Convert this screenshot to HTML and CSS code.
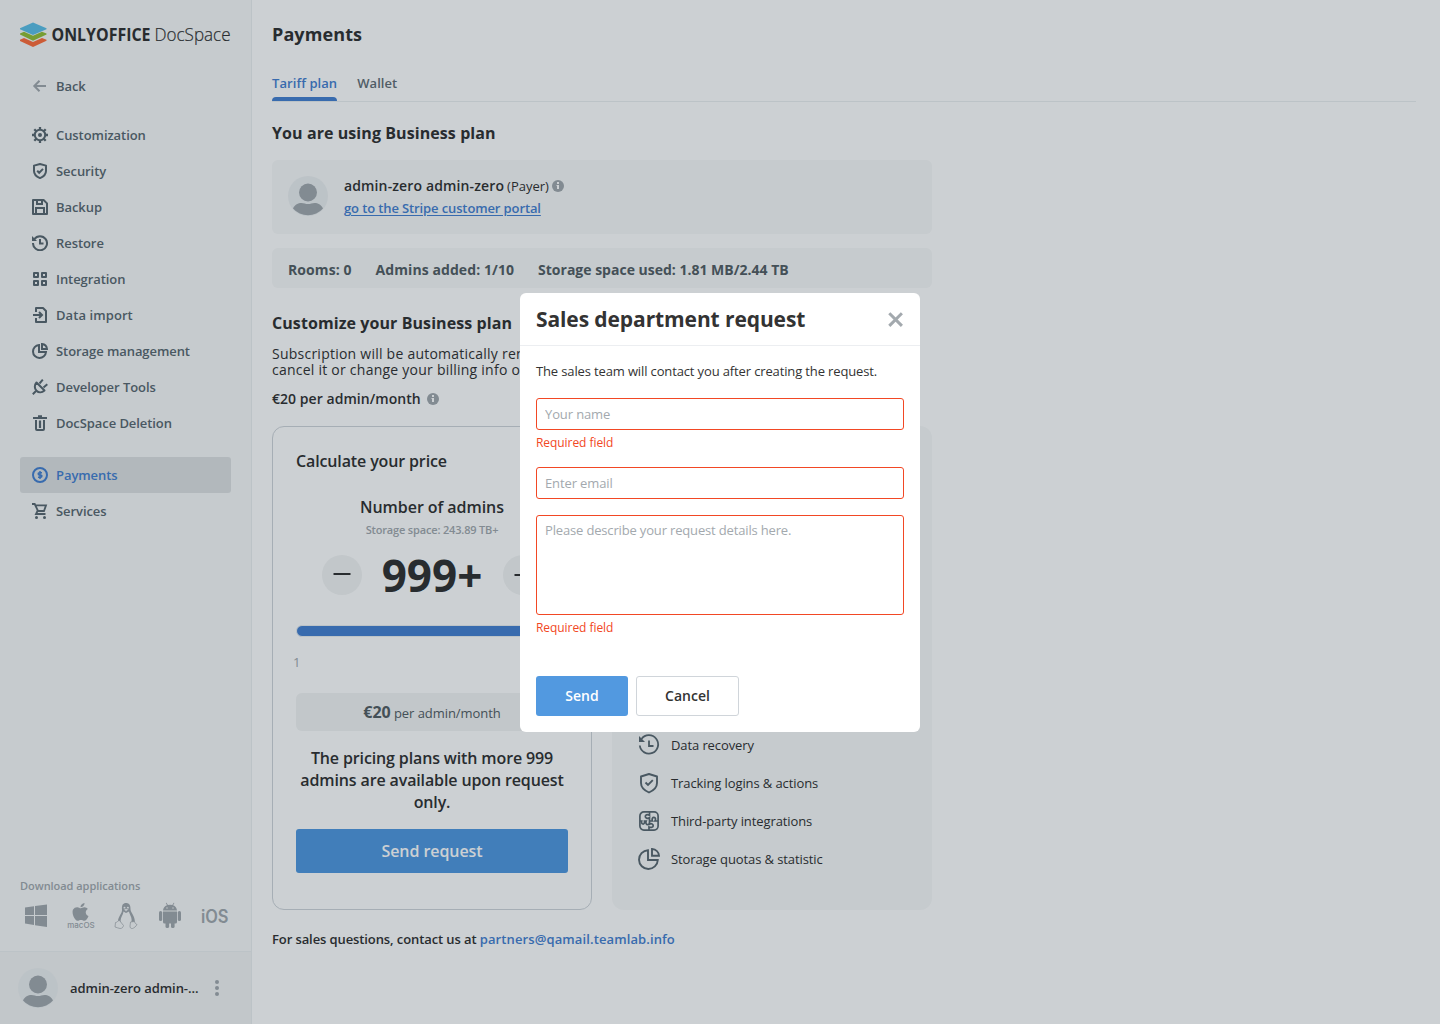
FILE: index.html
```html
<!DOCTYPE html>
<html lang="en">
<head>
<meta charset="utf-8">
<title>Payments - ONLYOFFICE DocSpace</title>
<link rel="stylesheet" href="styles.css">
</head>
<body>
<svg class="sprite" width="0" height="0">
  <symbol id="shield" viewBox="0 0 16 16"><path d="M8 1 14 2.600V8c0 3.400-2.600 5.700-6 7.100C4.600 13.700 2 11.400 2 8V2.600z" fill="none" stroke="currentColor" stroke-width="2" stroke-linejoin="round"/><path d="m5.200 7.800 2 2 3.800-3.900" fill="none" stroke="currentColor" stroke-width="2"/></symbol>
  <symbol id="person" viewBox="0 0 40 40"><circle class="person-bg" cx="20" cy="20" r="20"/><circle cx="20" cy="16.500" r="9"/><path d="M5 32.500C7 28.500 10 27 13.500 27 16 27.300 17.500 28 20 28s4-.700 6.500-1c3.500 0 6.500 1.500 8.500 5.500A20 20 0 0 1 5 32.500z"/></symbol>
  <symbol id="info" viewBox="0 0 12 12"><circle cx="6" cy="6" r="6"/><path class="info-mark" d="M5 2h2v2H5zM4.500 5H7v4H5V6h-.500z"/></symbol>
</svg>

<div class="app">
  <aside class="sidebar">
    <svg class="logo" width="214" height="26" viewBox="0 0 214 26">
      <path d="M0 17.800 4 16l9 4 9-4 4.500 1.800v1L13 25 0 18.900z" fill="#ff6f3d"/>
      <path d="M0 11.500 4 9.700l9 4 9-4 4.500 1.800v1L13 18.800 0 12.600z" fill="#95c038"/>
      <path d="M0 6.300 13 .500l13.500 5.800v1L13 13 0 7.300z" fill="#5dc0e8"/>
      <text class="logo-bold" x="31.500" y="19" textLength="99" lengthAdjust="spacingAndGlyphs">ONLYOFFICE</text>
      <text class="logo-light" x="134.500" y="19" textLength="76" lengthAdjust="spacingAndGlyphs">DocSpace</text>
    </svg>
    <a class="nav-item back"><svg width="16" height="16" viewBox="0 0 16 16"><path d="M14 8H2.500M7.500 2.800 2.300 8l5.200 5.200" fill="none" stroke="currentColor" stroke-width="2"/></svg>Back</a>
    <nav class="nav">
      <a class="nav-item"><svg width="16" height="16" viewBox="0 0 16 16"><circle cx="8" cy="8" r="5.200" fill="none" stroke="currentColor" stroke-width="2"/><circle cx="8" cy="8" r="2" fill="currentColor"/><path d="M8 0v3M8 13v3M0 8h3M13 8h3M2.300 2.300l2 2M11.700 11.700l2 2M13.700 2.300l-2 2M4.300 11.700l-2 2" stroke="currentColor" stroke-width="2.300"/></svg>Customization</a>
      <a class="nav-item"><svg width="16" height="16"><use href="#shield"/></svg>Security</a>
      <a class="nav-item"><svg width="16" height="16" viewBox="0 0 16 16"><g fill="none" stroke="currentColor" stroke-width="2"><path d="M1 1h10.600L15 4.400V15H1z" stroke-linejoin="round"/><path d="M5 1v4h5V1M4 15V9h8v6"/></g></svg>Backup</a>
      <a class="nav-item"><svg width="16" height="16" viewBox="0 0 16 16"><g fill="none" stroke="currentColor" stroke-width="2"><path d="M2.300 4.200A7 7 0 1 1 1 8"/><path d="M8 4v4.500h3.500"/></g><path d="M0 1v5h5z" fill="currentColor"/></svg>Restore</a>
      <a class="nav-item"><svg width="16" height="16" viewBox="0 0 16 16"><path d="M2 2h4v4H2zM10 2h4v4h-4zM2 10h4v4H2zM10 10h4v4h-4z" fill="none" stroke="currentColor" stroke-width="2" stroke-linejoin="round"/></svg>Integration</a>
      <a class="nav-item import"><svg width="16" height="16" viewBox="0 0 16 16"><g fill="none" stroke="currentColor" stroke-width="2"><path d="M4 5V1h7l3 3v11H4v-4" stroke-linejoin="round"/><path d="M1 8h8M7 5l3 3-3 3"/></g></svg>Data import</a>
      <a class="nav-item"><svg width="16" height="16" viewBox="0 0 16 16"><g fill="none" stroke="currentColor" stroke-width="2"><path d="M7 2a6.500 6.500 0 1 0 7 7H7z"/><path d="M10 1c2.700.300 4.700 2.300 5 5h-5z"/></g></svg>Storage management</a>
      <a class="nav-item"><svg width="16" height="16" viewBox="0 0 16 16"><g fill="none" stroke="currentColor" stroke-width="2"><path d="M4.500 3.500 12.500 11.500C10 13.800 6.700 14 4.500 11.800S2.200 6 4.500 3.500z" stroke-linejoin="round"/><path d="M4 12l-3.200 3.200M7.500 4.500l3.300-3.800M11.500 8.500l3.800-3.300"/></g></svg>Developer Tools</a>
      <a class="nav-item"><svg width="16" height="16" viewBox="0 0 16 16"><g fill="none" stroke="currentColor" stroke-width="2"><path d="M1 3h14M6 1.200h4M4 5v9q0 1 1 1h6q1 0 1-1V5"/><path d="M8 5.500V13" stroke-width="2.200"/></g></svg>DocSpace Deletion</a>
    </nav>
    <nav class="nav">
      <a class="nav-item active"><svg width="16" height="16" viewBox="0 0 16 16"><circle cx="8" cy="8" r="7" fill="none" stroke="currentColor" stroke-width="2"/><path d="M10 5.700H7.300a1.100 1.100 0 0 0 0 2.200h1.400a1.100 1.100 0 0 1 0 2.300H6M8 4v8" fill="none" stroke="currentColor" stroke-width="1.500"/></svg>Payments</a>
      <a class="nav-item"><svg width="16" height="16" viewBox="0 0 16 16"><path d="M0 1h2.700l3.300 7h6l2-5.700H3.500M5.500 8 4 11h9.500" fill="none" stroke="currentColor" stroke-width="1.800"/><circle cx="4.500" cy="14.500" r="1.500" fill="currentColor"/><circle cx="12.500" cy="14.500" r="1.500" fill="currentColor"/></svg>Services</a>
    </nav>

    <div class="downloads">
      <span>Download applications</span>
      <div class="download-icons">
        <svg width="28" height="28" viewBox="0 0 28 28"><path d="M3 5.500 12 4.200V13H3zM13 4 25 2.500V13H13zM3 14h9v9L3 21.500zM13 14h12v11l-12-1.800z"/></svg>
        <svg width="28" height="28" viewBox="0 0 28 28"><path d="M17.500 1c.200 2-1.500 4.200-4 4.200C13.300 3.200 15.300 1.200 17.500 1zM13.700 6.300c.900 0 2-1 3.800-1 1.300 0 2.600.700 3.300 1.800-3.100 1.900-2.500 5.700.700 7-.600 1.900-2.200 4.600-3.900 4.700-1.300 0-1.900-.800-3.600-.800s-2.400.800-3.500.800c-2.700-.100-6-7-4.600-11C7 5.800 8.800 5.100 10.300 5.200c1.500.100 2.500 1.100 3.400 1.100z"/><text class="mac" x=".3" y="25.700" textLength="27.300" lengthAdjust="spacingAndGlyphs">macOS</text></svg>
        <svg width="28" height="28" viewBox="0 0 28 28"><path d="M10 7.500C9.600 3 11 .900 14 .900s4.700 2 4.500 6.300c.300 4 4.500 6.300 4.400 13.200L17 21H9l-3-2c.300-5 4.400-7.600 4-11.500z"/><path class="cut" d="M11.500 9.500 14 11l3-1.500c.500 3 3.300 6 2.500 10-.500 3-2 4.500-5 4.500s-5.500-2-6-5c.300-4 2.600-6 3-9.500z"/><circle class="cut" cx="12.500" cy="5.700" r="1"/><circle class="cut" cx="15.900" cy="5.700" r="1"/><path class="foot" d="M3.500 20.500c2 0 2-2 4-2 1.500 1.500 2.500 3.500 4 5-.500 2-1.500 3-3.500 3-2-.500-3.500-1-5-1.500zM18.500 20l4-.500c.5 1.500 1 2.500 2.500 3-1 2-3 3.500-4.500 4-2 .3-2.500-1-2.500-2.500z"/><path d="M11.500 7.500 14 6.500l3 1-3 2z" class="foot"/></svg>
        <svg width="28" height="28" viewBox="0 0 28 28"><path d="M7 9.500h14V20q0 1.500-1.500 1.500h-11Q7 21.500 7 20zM7 8.500c.200-2.600 1.700-4.400 4-5.300L9.800 1l.700-.300 1.400 2.300a9 9 0 0 1 4.400 0L17.700.700l.700.300-1.300 2.200c2.300.9 3.700 2.700 3.900 5.300z"/><rect x="3" y="9" width="3.200" height="10" rx="1.600"/><rect x="21.800" y="9" width="3.200" height="10" rx="1.600"/><rect x="9.500" y="17" width="3.600" height="9" rx="1.600"/><rect x="15" y="17" width="3.600" height="9" rx="1.600"/><circle class="cut" cx="11" cy="6" r=".7"/><circle class="cut" cx="17" cy="6" r=".7"/></svg>
        <svg width="28" height="28" viewBox="0 0 28 28"><text class="ios" x="0" y="20.500" textLength="27.500" lengthAdjust="spacingAndGlyphs">iOS</text></svg>
      </div>
    </div>
    <div class="user">
      <svg class="avatar" width="40" height="40"><use href="#person"/></svg>
      <span class="user-name">admin-zero admin-...</span>
      <svg class="dots" width="4" height="16" viewBox="0 0 4 16"><circle cx="2" cy="2" r="2"/><circle cx="2" cy="8" r="2"/><circle cx="2" cy="14" r="2"/></svg>
    </div>
  </aside>

  <main class="main">
    <h1>Payments</h1>
    <div class="tabs"><a class="tab selected">Tariff plan</a><a class="tab">Wallet</a></div>
    <h2 class="plan-title">You are using Business plan</h2>
    <section class="payer">
      <svg class="avatar" width="40" height="40"><use href="#person"/></svg>
      <div>
        <div class="payer-name"><b>admin-zero admin-zero</b><span>(Payer)</span><svg class="info" width="12" height="12"><use href="#info"/></svg></div>
        <a class="portal">go to the Stripe customer portal</a>
      </div>
    </section>
    <section class="stats"><span>Rooms: 0</span><span>Admins added: 1/10</span><span>Storage space used: 1.81 MB/2.44 TB</span></section>
    <h2 class="customize">Customize your Business plan</h2>
    <p class="renewal">Subscription will be automatically renewed.<br>cancel it or change your billing info on</p>
    <div class="rate">€20 per admin/month<svg class="info" width="12" height="12"><use href="#info"/></svg></div>
    <div class="cards">
      <section class="calc">
        <h3>Calculate your price</h3>
        <div class="count-title">Number of admins</div>
        <div class="count-note">Storage space: 243.89 TB+</div>
        <div class="counter">
          <span class="round"><svg width="18" height="18" viewBox="0 0 18 18"><path d="M.500 8h17" stroke="currentColor" stroke-width="2"/></svg></span>
          <span class="count">999+</span>
          <span class="round"><svg width="18" height="18" viewBox="0 0 18 18"><path d="M.500 9h17M9 .500v17" stroke="currentColor" stroke-width="2"/></svg></span>
        </div>
        <div class="slider"></div>
        <div class="slider-min">1</div>
        <div class="price"><b>€20</b> per admin/month</div>
        <p class="upon">The pricing plans with more 999 admins are available upon request only.</p>
        <button class="request">Send request</button>
      </section>
      <section class="benefits">
        <div class="benefit"><svg width="24" height="24" viewBox="0 0 24 24"><g fill="none" stroke="currentColor" stroke-width="1.800"><path d="M4.500 6A9.200 9.200 0 1 1 2.800 12.500"/><path d="M12 7.500V13h4.500"/></g><path d="M2 3v6h6z" fill="currentColor"/></svg>Data recovery</div>
        <div class="benefit"><svg width="24" height="24" viewBox="0 0 24 24"><path d="m12 3 8 2.500V12c0 4.500-3.500 7.500-8 9.500-4.500-2-8-5-8-9.500V5.500z" fill="none" stroke="currentColor" stroke-width="1.900" stroke-linejoin="round"/><path d="m8.500 11.500 2.500 2.500 4.800-4.800" fill="none" stroke="currentColor" stroke-width="1.900"/></svg>Tracking logins &amp; actions</div>
        <div class="benefit"><svg width="24" height="24" viewBox="0 0 24 24"><g fill="none" stroke="currentColor" stroke-width="1.700"><rect x="2.900" y="2.900" width="18.200" height="18.200" rx="4"/><path d="M12.500 3v3.300C10 5 8.300 6 8.300 7.500s2 2.500 4.200 1.300V12c.300 2.300-.500 3.700-1.800 3.700S8.300 14 9.200 12H7.500c.300 2-.500 3.200-1.700 3S4.300 13.500 4.700 12H3M12.500 12h3c-1-2.300 0-3.700 1.500-3.700S19 10 18 12h3M12.500 12v3.200c2-1.200 3.700 0 3.700 1.500s-2 2.300-4.200 1.300v3"/></g></svg>Third-party integrations</div>
        <div class="benefit"><svg width="24" height="24" viewBox="0 0 24 24"><g fill="none" stroke="currentColor" stroke-width="1.900"><path d="M11 3.200A9.400 9.400 0 1 0 20.800 13H11z"/><path d="M15 2c4 .300 6.800 3 7 6.800h-7z"/></g></svg>Storage quotas &amp; statistic</div>
      </section>
    </div>
    <p class="contact">For sales questions, contact us at <a>partners@qamail.teamlab.info</a></p>
  </main>
</div>

<div class="backdrop">
  <div class="dialog">
    <header class="dialog-head"><span>Sales department request</span><svg width="17" height="17" viewBox="0 0 17 17"><path d="m2.300 2.300 12.600 12.600M14.900 2.300 2.300 14.900" stroke="#a3a9ae" stroke-width="3"/></svg></header>
    <div class="dialog-body">
      <p class="lead">The sales team will contact you after creating the request.</p>
      <input class="field" placeholder="Your name">
      <div class="error">Required field</div>
      <input class="field email" placeholder="Enter email">
      <textarea class="field details" placeholder="Please describe your request details here."></textarea>
      <div class="error">Required field</div>
      <div class="actions"><button class="send">Send</button><button class="cancel">Cancel</button></div>
    </div>
  </div>
</div>
</body>
</html>
```
FILE: styles.css
```css
* { box-sizing: border-box; }
body { margin: 0; font-family: "Open Sans", sans-serif; font-size: 13px; line-height: 20px; color: #333; background: #fff; overflow: hidden; }
h1, h2, h3, p { margin: 0; }
button, input, textarea { font-family: inherit; }
svg { flex: none; display: block; }
.sprite { position: absolute; }
.app { display: flex; height: 1024px; }

.sidebar { width: 252px; flex: none; display: flex; flex-direction: column; background: #f8f9f9; border-right: 1px solid #eceff1; }
.logo { margin: 22px 0 20px 20px; overflow: visible; }
.logo-bold { font-weight: 700; font-size: 17px; fill: #333; }
.logo-light { font-weight: 300; font-size: 18px; fill: #333; stroke: #333; stroke-width: .2px; }
.nav { margin-bottom: 16px; }
.nav-item { display: flex; align-items: center; gap: 8px; height: 36px; margin: 0 20px; padding-left: 12px; font-weight: 600; letter-spacing: -.07px; color: #5c6a72; border-radius: 3px; }
.nav-item.import { letter-spacing: .08px; }
.nav-item.active { background: #dfe2e3; color: #4781d1; }
.back { margin-bottom: 13px; }
.back svg { color: #a3a9ae; }
.downloads { margin-top: auto; padding: 0 20px 21px; font-size: 11px; font-weight: 600; line-height: 16px; letter-spacing: -.04px; color: #a3a9ae; }
.download-icons { display: flex; justify-content: space-between; margin: 8px 2px 0; fill: #a3a9ae; }
.download-icons svg { overflow: visible; }
.cut { fill: #f8f9f9; }
.foot { fill: #f8f9f9; stroke: #a3a9ae; stroke-width: .7; }
.mac { font: 500 8px "Inter", sans-serif; }
.ios { font: 600 18px "Inter", sans-serif; }
.user { display: flex; align-items: center; height: 73px; padding-left: 18px; background: #f3f4f4; border-top: 1px solid #eceff1; font-weight: 600; letter-spacing: -.05px; }
.user-name { width: 145px; margin-left: 12px; }
.dots { fill: #a3a9ae; }
.avatar { fill: #a3a9ae; }
.person-bg { fill: #eceff1; }
.info { fill: #a3a9ae; }
.info-mark { fill: #fff; }

.main { flex: 1; padding: 0 24px 0 20px; }
h1 { height: 68px; font-size: 18px; line-height: 68px; font-weight: 700; letter-spacing: .1px; }
.tabs { display: flex; gap: 20px; height: 34px; border-bottom: 1px solid #eceff1; font-weight: 600; letter-spacing: .07px; color: #657077; }
.tab { height: 33px; padding-top: 5px; }
.tab.selected { display: flex; flex-direction: column; justify-content: space-between; color: #4781d1; }
.tab.selected::after { content: ""; height: 4px; border-radius: 4px 4px 0 0; background: #4781d1; }
h2 { font-size: 16px; line-height: 22px; font-weight: 700; letter-spacing: .08px; }
.plan-title { margin: 20px 0 16px; }
.payer { display: flex; gap: 16px; width: 660px; height: 74px; padding: 16px; background: #f8f9f9; border-radius: 6px; }
.payer-name { display: flex; align-items: center; gap: 3px; }
.payer-name b { font-size: 14px; font-weight: 600; letter-spacing: .13px; }
.portal { display: block; margin-top: 2px; font-weight: 600; letter-spacing: -.12px; color: #4781d1; text-decoration: underline; text-underline-offset: 2px; }
.stats { display: flex; align-items: center; gap: 24px; width: 660px; height: 40px; margin-top: 14px; padding: 3px 16px 0; background: #f8f9f9; border-radius: 6px; font-size: 14px; font-weight: 700; color: #555f65; }
.stats span:not(:last-child) { letter-spacing: .08px; }
.customize { margin-top: 24px; }
.renewal { margin-top: 12px; font-size: 14px; line-height: 16px; letter-spacing: .24px; }
.rate { display: flex; align-items: center; gap: 6px; margin-top: 11px; font-size: 14px; font-weight: 600; letter-spacing: .05px; }
.cards { display: flex; gap: 20px; height: 484px; margin-top: 17px; }
.calc { width: 320px; padding: 23px; border: 1px solid #d0d5da; border-radius: 12px; text-align: center; }
h3, .count-title { font-size: 16px; line-height: 22px; font-weight: 600; letter-spacing: -.06px; }
h3 { text-align: left; margin-bottom: 24px; letter-spacing: -.13px; }
.count-note { margin-top: 4px; font-size: 11px; line-height: 16px; font-weight: 600; letter-spacing: -.17px; color: #a3a9ae; }
.counter { display: flex; justify-content: center; align-items: center; gap: 20px; height: 40px; margin-top: 17px; }
.round { display: flex; align-items: center; justify-content: center; width: 40px; height: 40px; border-radius: 50%; background: #f3f4f4; }
.count { width: 101px; font-size: 44px; line-height: 40px; font-weight: 700; }
.slider { height: 12px; margin-top: 30px; border: 1px solid #eceff1; border-radius: 6px; background: #4781d1; }
.slider-min { width: 20px; margin: 15px 0 0 -3px; text-align: left; color: #a3a9ae; }
.price { height: 38px; margin-top: 21px; line-height: 38px; letter-spacing: -.06px; background: #f3f4f4; border-radius: 6px; color: #555f65; }
.price b { font-size: 16px; }
.upon { margin-top: 16px; font-size: 16px; line-height: 22px; font-weight: 600; letter-spacing: -.13px; }
.request { width: 100%; height: 44px; margin-top: 16px; border: 0; border-radius: 3px; background: #5299e0; color: #fff; font-size: 16px; font-weight: 600; letter-spacing: -.06px; }
.benefits { display: flex; flex-direction: column; justify-content: flex-end; gap: 14px; width: 320px; padding: 0 25px 39px; background: #f8f9f9; border-radius: 12px; }
.benefit { display: flex; align-items: center; gap: 10px; height: 24px; letter-spacing: -.1px; }
.benefit svg { color: #5c6a72; }
.contact { margin-top: 19px; font-weight: 600; letter-spacing: -.1px; }
.contact a { color: #4781d1; letter-spacing: .11px; }

.backdrop { position: fixed; inset: 0; display: flex; align-items: center; justify-content: center; background: rgba(2, 22, 34, .2); }
.dialog { width: 400px; height: 439px; margin-top: 1px; background: #fff; border-radius: 6px; }
.dialog-head { display: flex; align-items: center; justify-content: space-between; height: 53px; padding: 0 16px; border-bottom: 1px solid #eceef1; font-size: 21px; font-weight: 700; letter-spacing: -.1px; }
.dialog-body { padding: 15px 16px 0; }
.lead { margin-bottom: 17px; letter-spacing: -.135px; }
.field { display: block; width: 100%; height: 32px; padding: 0 8px; border: 1px solid #f24724; border-radius: 3px; font-size: 13px; line-height: 20px; letter-spacing: -.12px; outline: 0; background: #fff; }
.field::placeholder { color: #a3a9ae; opacity: 1; }
.email { margin: 16px 0; }
.details { height: 100px; padding: 4px 8px; letter-spacing: -.16px; resize: none; }
.error { padding-top: 5px; font-size: 12px; line-height: 16px; letter-spacing: -.06px; color: #f24724; }
.actions { display: flex; gap: 8px; margin-top: 40px; }
.actions button { height: 40px; padding: 0 0 2px; border-radius: 3px; font-size: 14px; font-weight: 600; }
.send { width: 92px; border: 0; background: #5299e0; color: #fff; }
.cancel { width: 103px; border: 1px solid #d0d5da; background: #fff; color: #333; }
```
